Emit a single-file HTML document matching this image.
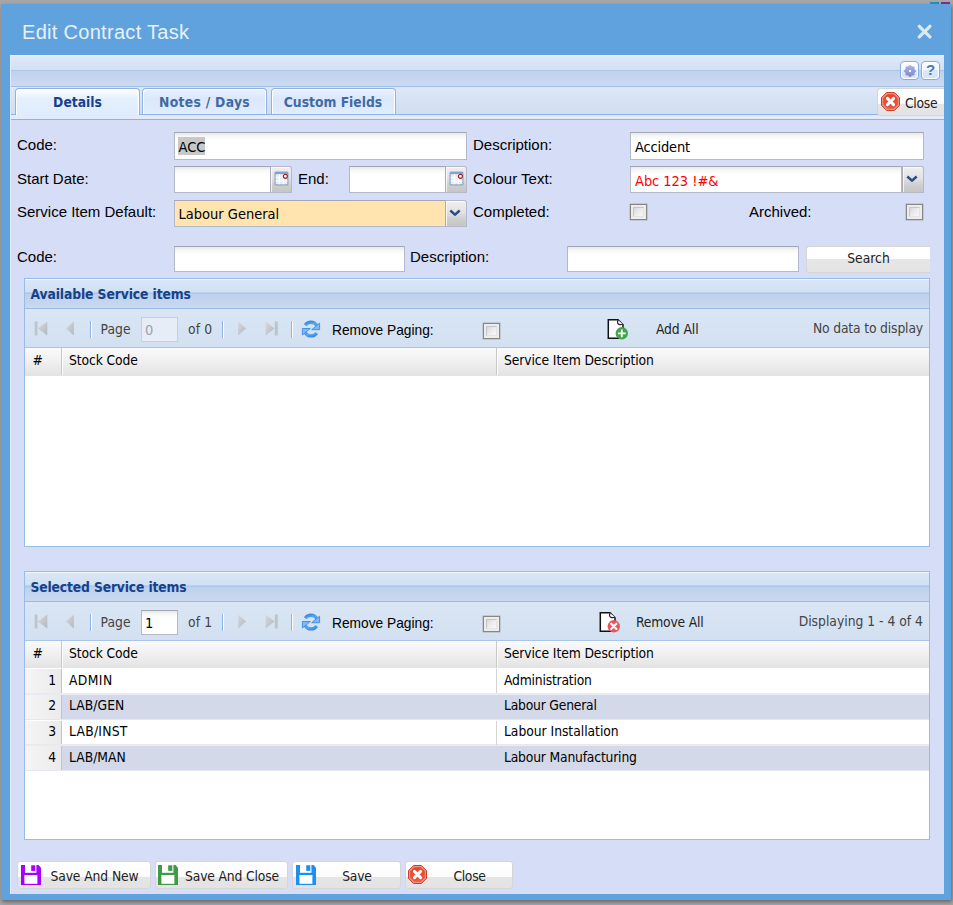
<!DOCTYPE html>
<html lang="en">
<head>
<meta charset="utf-8">
<title>Edit Contract Task</title>
<style>
*{box-sizing:border-box;margin:0;padding:0}
html,body{width:953px;height:905px;overflow:hidden}
body{background:#a6a6a6;position:relative;font-family:"Liberation Sans",Arial,sans-serif;font-size:15px;color:#000}
.abs,.win *{position:absolute}
.win{position:absolute;left:1px;top:4px;width:950px;height:896px;background:#5fa2dd;box-shadow:1px 2px 4px rgba(0,0,0,.4)}
.th{font-family:"DejaVu Sans Condensed","DejaVu Sans","Liberation Sans",sans-serif;font-stretch:condensed}
.t{white-space:nowrap;font-size:13.75px;line-height:16px;display:block}
/* all following coordinates are page coordinates, container #pg is at 0,0 */
#pg{position:absolute;left:0;top:0;width:953px;height:905px}
#pg *{position:absolute}
.title{left:22px;top:20px;font-size:20px;line-height:24px;color:#e9f1fa;letter-spacing:.3px;white-space:nowrap}
.inner{left:10px;top:55px;width:934px;height:839px;background:#d6ddf6;border-left:1px solid #e3ebf8;border-top:1px solid #e9f0fa}
.hdA{left:11px;top:56px;width:933px;height:14px;background:linear-gradient(#dfe9f7,#d2e0f3)}
.hdL{left:11px;top:70px;width:933px;height:1px;background:#afc8ea}
.hdB{left:11px;top:71px;width:933px;height:15px;background:linear-gradient(#bfd1ed,#cddbf1)}
.hdL2{left:11px;top:86px;width:933px;height:1px;background:#a3c0e8}
.tool{top:61px;width:19px;height:19px;border:1px solid #86abe0;border-radius:4px;background:linear-gradient(#fbfdff 0,#f1f6fd 48%,#dbe9fb 50%,#d3e4fa 100%);box-shadow:inset 0 0 0 1px #fff}
.strip{left:11px;top:87px;width:933px;height:27px;background:linear-gradient(#dee8f6,#cfdef1)}
.stripL{left:11px;top:114px;width:933px;height:1px;background:#8db2e3}
.spacer{left:11px;top:115px;width:933px;height:4px;background:#e1ebfb}
.stripL2{left:11px;top:119px;width:933px;height:1px;background:#8db2e3}
.tab{top:88px;height:26px;border:1px solid #8db2e3;border-bottom:none;border-radius:4px 4px 0 0;background:linear-gradient(#e9f1fd,#dbe8fb 40%,#e1ecfd);box-shadow:inset 1px 1px 0 #fff,inset -1px 0 0 #fff}
.tab.act{height:27px;background:linear-gradient(#ffffff,#e6f0fd 35%,#deecfd)}
.tab .t{left:0;right:0;text-align:center;top:5px;font-size:13.75px;font-weight:bold;color:#416aa3;line-height:16px}
.tab.act .t{color:#15428b}
.lbl{font-size:15px;line-height:18px;white-space:nowrap;color:#000}
.inp{background:#fff linear-gradient(#e6e9e6 0,#f5f6f5 3px,#fff 7px);border:1px solid #b5b8c8;border-top-color:#a3a6b5;height:28px}
.inp .t{line-height:18px}
.trg{width:22px;border:1px solid #b5b8c8;border-left-color:#a9acb8;border-radius:0 3px 0 0;background:linear-gradient(#efefef,#e2e2e2 45%,#cdcdcd 75%,#c6c6c6);box-shadow:inset 1px 1px 0 rgba(255,255,255,.75)}
.cb{width:16.500px;height:16px;border:1px solid #878783;background:#ededed;box-shadow:0 0 0 .5px rgba(135,135,131,.55)}
.cb::after{content:"";position:absolute;left:2px;top:2px;right:2px;bottom:2px;border:1px solid #c2c7cb;border-right-color:#e2e4e5;border-bottom-color:#e2e4e5;background:linear-gradient(135deg,#d4d8db,#ececec 50%,#f7f7f7)}
.btn{border:1px solid #d6d6d6;border-radius:3px;background:linear-gradient(#fff 0,#fff 50%,#e6e6e6 50%,#e4e4e4 100%)}
.btn .t{font-size:13.75px;line-height:16px;color:#222}
.pan{border:1px solid #99bbe8;background:#fff}
.ph{height:31px;box-shadow:inset 0 1px 0 #f3f7fc;background:linear-gradient(#dbe7f6 0,#d0e0f3 46%,#adc6ea 47%,#adc6ea 50%,#bdd0ec 51%,#cad9f0 100%);border-bottom:1px solid #99bbe8}
.ph .t{left:5.500px;top:7px;font-size:13.75px;font-weight:bold;color:#15428b;line-height:16px}
.tb{height:38px;background:linear-gradient(#dae6f4,#d2e0f1);border-bottom:1px solid #a9c4e9}
.tb .t{font-size:13.75px;line-height:16px;color:#444}
.sep{width:2px;height:17px;background:linear-gradient(90deg,#8db2e3 50%,#fff 50%)}
.gh{height:28px;background:linear-gradient(#fafafa,#f1f1f1 45%,#e3e3e3);border-bottom:1px solid #e3e3e3}
.gh .t,.row .t{font-size:13.75px;line-height:16px;color:#000}
.row{height:25.5px;left:0;width:904px;border-bottom:1px solid #e9e9e9;border-top:1px solid #fff;background:#fff}
.row.alt{background:#d3d9e8;border-top-color:#e9ecf4;border-bottom-color:#e4e7ef}
.num{left:0;top:0;width:37px;height:23.5px;background:linear-gradient(90deg,#f5f5f5,#ebebeb);border-right:1px solid #c4c4c4}
</style>
</head>
<body>
<i class="abs" style="left:930px;top:2px;width:9px;height:2px;background:#2b8fb5"></i><i class="abs" style="left:941px;top:2px;width:9px;height:2px;background:#8a2a8c"></i>
<div class="win"></div>
<div id="pg">
<div class="title">Edit Contract Task</div>
<svg style="left:917px;top:24px" width="15" height="15" viewBox="0 0 15 15"><path d="M2.300 2.300 L12.900 12.900 M12.900 2.300 L2.300 12.900" stroke="#dde8f6" stroke-width="3.200" stroke-linecap="round"/></svg>
<div class="inner"></div>
<div class="hdA"></div><div class="hdL"></div><div class="hdB"></div><div class="hdL2"></div>
<div class="tool" style="left:900px"><svg style="left:2.500px;top:2.500px" width="12" height="12" viewBox="0 0 12 12"><defs><linearGradient id="gg" x1="0" y1="0" x2="0" y2="1"><stop offset="0" stop-color="#a9b1e2"/><stop offset="1" stop-color="#7f88cd"/></linearGradient></defs><path d="M4.99 1.41 L5.17 0.56 L6.83 0.56 L7.01 1.41 L8.53 2.04 L9.26 1.57 L10.43 2.74 L9.96 3.47 L10.59 4.99 L11.44 5.17 L11.44 6.83 L10.59 7.01 L9.96 8.53 L10.43 9.26 L9.26 10.43 L8.53 9.96 L7.01 10.59 L6.83 11.44 L5.17 11.44 L4.99 10.59 L3.47 9.96 L2.74 10.43 L1.57 9.26 L2.04 8.53 L1.41 7.01 L0.56 6.83 L0.56 5.17 L1.41 4.99 L2.04 3.47 L1.57 2.74 L2.74 1.57 L3.47 2.04z" fill="url(#gg)" stroke="url(#gg)" stroke-width=".8" stroke-linejoin="round"/><circle cx="6" cy="6" r="1.200" fill="#f4f6fd"/></svg></div>
<div class="tool" style="left:921px"><span class="t" style="left:0;width:17px;text-align:center;top:0;font:bold 15px/16px 'Liberation Sans',sans-serif;color:#4b7aaf">?</span></div>
<div class="strip"></div><div class="stripL"></div><div class="spacer"></div><div class="stripL2"></div>
<div class="tab act th" style="left:15px;width:125px"><span class="t" style="letter-spacing:0px">Details</span></div>
<div class="tab th" style="left:142px;width:125px"><span class="t" style="letter-spacing:0.3px">Notes / Days</span></div>
<div class="tab th" style="left:270.5px;width:125px"><span class="t" style="letter-spacing:0px">Custom Fields</span></div>
<div class="btn" style="left:877px;top:88px;width:67px;height:28px;background:linear-gradient(#fff 0,#fcfcfc 15px,#e5e5e5 15px,#e3e3e3 100%);border-radius:4px 0 0 4px;border-right:none"></div>
<svg style="left:881px;top:92px" width="19" height="19" viewBox="0 0 19 19"><defs><linearGradient id="rf" x1="0" y1="0" x2="1" y2="1"><stop offset="0" stop-color="#3588e2"/><stop offset=".6" stop-color="#5aa6f0"/><stop offset="1" stop-color="#4a98ea"/></linearGradient><linearGradient id="pgr" x1="0" y1="0" x2="1" y2="1"><stop offset="0" stop-color="#d6d9de"/><stop offset="1" stop-color="#b3b7bf"/></linearGradient><linearGradient id="rg" x1="0" y1="0" x2="0" y2="1"><stop offset="0" stop-color="#e8452a"/><stop offset="1" stop-color="#e65a49"/></linearGradient></defs><path d="M5.600 .5h7.800l5.100 5.100v7.800l-5.100 5.100H5.600L.5 13.400V5.600z" fill="#f0907f" stroke="#cc3f2f" stroke-width="1"/><path d="M6.300 2.200h6.400l4.100 4.100v6.400l-4.100 4.100H6.300l-4.100-4.100V6.300z" fill="url(#rg)"/><path d="M6.400 6.400l6.200 6.200M12.600 6.400l-6.200 6.200" stroke="#fff" stroke-width="2.900" stroke-linecap="round"/></svg>
<span class="t th" style="left:905px;top:95px;color:#222;letter-spacing:-0.3px">Close</span>
<span class="lbl" style="left:17px;top:136px">Code:</span>
<div class="inp th" style="left:174px;top:132px;width:293px;height:28px;"><i style="left:3px;top:4px;width:27px;height:18px;background:#c8c8c8"></i><span class="t " style="left:3.5px;top:4.5px;font-size:14.5px;letter-spacing:0px">ACC</span></div>
<span class="lbl" style="left:473px;top:136px">Description:</span>
<div class="inp th" style="left:630px;top:132px;width:294px;height:28px;"><span class="t " style="left:4px;top:4.5px;font-size:14.5px;letter-spacing:-0.17px">Accident</span></div>
<span class="lbl" style="left:17px;top:170px">Start Date:</span>
<div class="inp th" style="left:174px;top:166px;width:97px;height:27px;"></div>
<div class="trg" style="left:269.5px;top:166px;height:27px"><svg style="left:3px;top:4px" width="15" height="15" viewBox="0 0 15 15"><rect x=".5" y=".5" width="14" height="14" rx="1.500" fill="#87a1cd"/><rect x="1.700" y="3.200" width="11.600" height="10.100" fill="#e9edf4"/><path d="M1.700 6.600h11.600M1.700 10h11.600M5.500 3.200v10.100M9.500 3.200v10.100" stroke="#fff" stroke-width="1"/><circle cx="11.400" cy="5.300" r="2" fill="#fff" stroke="#9f2232" stroke-width="1.200"/></svg></div>
<span class="lbl" style="left:298px;top:170px">End:</span>
<div class="inp th" style="left:349px;top:166px;width:97px;height:27px;"></div>
<div class="trg" style="left:445px;top:166px;height:27px"><svg style="left:3px;top:4px" width="15" height="15" viewBox="0 0 15 15"><rect x=".5" y=".5" width="14" height="14" rx="1.500" fill="#87a1cd"/><rect x="1.700" y="3.200" width="11.600" height="10.100" fill="#e9edf4"/><path d="M1.700 6.600h11.600M1.700 10h11.600M5.500 3.200v10.100M9.500 3.200v10.100" stroke="#fff" stroke-width="1"/><circle cx="11.400" cy="5.300" r="2" fill="#fff" stroke="#9f2232" stroke-width="1.200"/></svg></div>
<span class="lbl" style="left:473px;top:170px">Colour Text:</span>
<div class="inp th" style="left:630px;top:166px;width:272px;height:27px;"><span class="t " style="left:4px;top:5px;font-size:14.5px;color:#f00;letter-spacing:-0.04px">Abc 123 !#&amp;</span></div>
<div class="trg" style="left:902px;top:166px;height:27px"><svg style="left:3px;top:8px" width="12" height="8" viewBox="0 0 12 8"><path d="M1.300 1.500L6 5.600 10.700 1.500" fill="none" stroke="#2a4b8d" stroke-width="2.500"/></svg></div>
<span class="lbl" style="left:17px;top:203px">Service Item Default:</span>
<div class="inp th" style="left:174px;top:200px;width:272px;height:27px;background:#ffe4b0"><span class="t " style="left:3.5px;top:3.5px;font-size:14.5px;letter-spacing:0px">Labour General</span></div>
<div class="trg" style="left:445px;top:200px;height:27px"><svg style="left:3px;top:8px" width="12" height="8" viewBox="0 0 12 8"><path d="M1.300 1.500L6 5.600 10.700 1.500" fill="none" stroke="#2a4b8d" stroke-width="2.500"/></svg></div>
<span class="lbl" style="left:473px;top:203px">Completed:</span>
<div class="cb" style="left:630px;top:204px"></div>
<span class="lbl" style="left:749px;top:203px">Archived:</span>
<div class="cb" style="left:906px;top:204px"></div>
<span class="lbl" style="left:17px;top:248px">Code:</span>
<div class="inp th" style="left:174px;top:246px;width:231px;height:26px;"></div>
<span class="lbl" style="left:410px;top:248px">Description:</span>
<div class="inp th" style="left:567px;top:246px;width:232px;height:26px;"></div>
<div class="btn th" style="left:806px;top:246px;width:124px;height:27px;border-right:none;border-radius:3px 0 0 3px"><span class="t th" style="left:0px;top:3px;color:#222;right:0;text-align:center">Search</span></div>
<div class="pan" style="left:24px;top:278px;width:906px;height:269px"></div>
<div class="ph th" style="left:25px;top:279px;width:904px;height:30px"><span class="t" style="letter-spacing:-0.1px">Available Service items</span></div>
<div class="tb" style="left:25px;top:309px;width:904px;height:39px"></div>
<svg style="left:34px;top:321px" width="14" height="15" viewBox="0 0 14 15"><rect x=".7" y=".5" width="2.800" height="14" fill="#bfc3ca"/><path d="M13.300 .5v14L3.800 7.500z" fill="url(#pgr)"/></svg>
<svg style="left:65px;top:321px" width="10" height="15" viewBox="0 0 10 15"><path d="M8.800 .5v14L1 7.500z" fill="url(#pgr)"/></svg>
<div class="sep" style="left:90px;top:321px"></div>
<span class="t th" style="left:100.5px;top:321px;color:#444;letter-spacing:0.1px">Page</span>
<div class="inp th" style="left:141px;top:317px;width:37px;height:25px;background:#e6edf6;border-color:#c4cfdf;"><span class="t " style="left:3px;top:3px;font-size:14.5px;color:#9aa0a8">0</span></div>
<span class="t th" style="left:188px;top:321px;color:#444;letter-spacing:0.1px">of 0</span>
<div class="sep" style="left:222px;top:321px"></div>
<svg style="left:237px;top:321px" width="10" height="15" viewBox="0 0 10 15"><path d="M1.200 .5v14L9 7.500z" fill="url(#pgr)"/></svg>
<svg style="left:265px;top:321px" width="14" height="15" viewBox="0 0 14 15"><path d="M.7 .5v14L9.500 7.500z" fill="url(#pgr)"/><rect x="9.800" y=".5" width="3" height="14" fill="#bfc3ca"/></svg>
<div class="sep" style="left:291px;top:321px"></div>
<svg style="left:301px;top:319px" width="20" height="20" viewBox="0 0 20 20"><g id="ra278"><path d="M4.250 6.200A6.900 6.900 0 0 1 15.700 6.400" fill="none" stroke="url(#rf)" stroke-width="3.300"/><path d="M18.600 4.200v6.500h-7.900z" fill="#7db9f6" stroke="#3a8ce4" stroke-width=".9" stroke-linejoin="round"/></g><use href="#ra278" transform="rotate(180 10 10.100)"/></svg>
<span class="lbl" style="left:332px;top:322.5px;font-size:13.75px;line-height:16px">Remove Paging:</span>
<div class="cb" style="left:483px;top:323px"></div>
<svg style="left:606.5px;top:319px" width="22" height="21" viewBox="0 0 22 21"><path d="M1.300 .8h9.700l5 5v13.400H1.300z" fill="#fff" stroke="#111" stroke-width="1.500"/><path d="M11.200 1.200c-1.300 2-.8 4 1.500 4.400 1.200.2 2.300-.1 3-.6" fill="#fff" stroke="#222" stroke-width="1.200"/><circle cx="14.800" cy="14.300" r="6.200" fill="#43a44e"/><path d="M14.800 10.400v7.800M10.900 14.300h7.800" stroke="#fff" stroke-width="1.800"/></svg>
<span class="t th" style="left:656px;top:321px;color:#222;letter-spacing:-0.1px">Add All</span>
<span class="t th" style="right:30px;top:320px;color:#444;letter-spacing:-0.15px">No data to display</span>
<div class="gh th" style="left:25px;top:348px;width:904px;height:28px">
<i style="left:36px;top:0;width:2px;height:27px;background:linear-gradient(90deg,#c8c8c8 50%,#fbfbfb 50%)"></i>
<i style="left:471px;top:0;width:2px;height:27px;background:linear-gradient(90deg,#c8c8c8 50%,#fbfbfb 50%)"></i>
<span class="t th" style="left:7.5px;top:4px">#</span><span class="t th" style="left:44px;top:4px;letter-spacing:-0.1px">Stock Code</span><span class="t th" style="left:479px;top:4px;letter-spacing:-0.1px">Service Item Description</span>
</div>
<div class="pan" style="left:24px;top:571px;width:906px;height:269px"></div>
<div class="ph th" style="left:25px;top:572px;width:904px;height:30px"><span class="t" style="letter-spacing:-0.15px">Selected Service items</span></div>
<div class="tb" style="left:25px;top:602px;width:904px;height:39px"></div>
<svg style="left:34px;top:614px" width="14" height="15" viewBox="0 0 14 15"><rect x=".7" y=".5" width="2.800" height="14" fill="#bfc3ca"/><path d="M13.300 .5v14L3.800 7.500z" fill="url(#pgr)"/></svg>
<svg style="left:65px;top:614px" width="10" height="15" viewBox="0 0 10 15"><path d="M8.800 .5v14L1 7.500z" fill="url(#pgr)"/></svg>
<div class="sep" style="left:90px;top:614px"></div>
<span class="t th" style="left:100.5px;top:614px;color:#444;letter-spacing:0.1px">Page</span>
<div class="inp th" style="left:141px;top:610px;width:37px;height:25px;"><span class="t " style="left:3px;top:3px;font-size:14.5px;color:#000">1</span></div>
<span class="t th" style="left:188px;top:614px;color:#444;letter-spacing:0.1px">of 1</span>
<div class="sep" style="left:222px;top:614px"></div>
<svg style="left:237px;top:614px" width="10" height="15" viewBox="0 0 10 15"><path d="M1.200 .5v14L9 7.500z" fill="url(#pgr)"/></svg>
<svg style="left:265px;top:614px" width="14" height="15" viewBox="0 0 14 15"><path d="M.7 .5v14L9.500 7.500z" fill="url(#pgr)"/><rect x="9.800" y=".5" width="3" height="14" fill="#bfc3ca"/></svg>
<div class="sep" style="left:291px;top:614px"></div>
<svg style="left:301px;top:612px" width="20" height="20" viewBox="0 0 20 20"><g id="ra571"><path d="M4.250 6.200A6.900 6.900 0 0 1 15.700 6.400" fill="none" stroke="url(#rf)" stroke-width="3.300"/><path d="M18.600 4.200v6.500h-7.900z" fill="#7db9f6" stroke="#3a8ce4" stroke-width=".9" stroke-linejoin="round"/></g><use href="#ra571" transform="rotate(180 10 10.100)"/></svg>
<span class="lbl" style="left:332px;top:615.5px;font-size:13.75px;line-height:16px">Remove Paging:</span>
<div class="cb" style="left:483px;top:616px"></div>
<svg style="left:598.5px;top:612px" width="22" height="21" viewBox="0 0 22 21"><path d="M1.300 .8h9.700l5 5v13.400H1.300z" fill="#fff" stroke="#111" stroke-width="1.500"/><path d="M11.200 1.200c-1.300 2-.8 4 1.500 4.400 1.200.2 2.300-.1 3-.6" fill="#fff" stroke="#222" stroke-width="1.200"/><circle cx="14.800" cy="14.300" r="6.200" fill="#ea5460"/><path d="M12.200 11.700l5.200 5.200M17.400 11.700l-5.200 5.200" stroke="#fff" stroke-width="2.100" stroke-linecap="round"/></svg>
<span class="t th" style="left:636px;top:614px;color:#222;letter-spacing:-0.2px">Remove All</span>
<span class="t th" style="right:30px;top:613px;color:#444;letter-spacing:0px">Displaying 1 - 4 of 4</span>
<div class="gh th" style="left:25px;top:641px;width:904px;height:28px">
<i style="left:36px;top:0;width:2px;height:27px;background:linear-gradient(90deg,#c8c8c8 50%,#fbfbfb 50%)"></i>
<i style="left:471px;top:0;width:2px;height:27px;background:linear-gradient(90deg,#c8c8c8 50%,#fbfbfb 50%)"></i>
<span class="t th" style="left:7.5px;top:4px">#</span><span class="t th" style="left:44px;top:4px;letter-spacing:-0.1px">Stock Code</span><span class="t th" style="left:479px;top:4px;letter-spacing:-0.1px">Service Item Description</span>
</div>
<div class="row th" style="left:25px;top:668px"><div class="num"><span class="t th" style="right:5px;top:3px">1</span></div><span class="t th" style="left:44px;top:3px;letter-spacing:0.4px">ADMIN</span><i style="left:471px;top:0;width:1px;height:24px;background:#d4d4d4"></i><span class="t th" style="left:479px;top:3px;letter-spacing:-0.2px">Administration</span></div>
<div class="row th alt" style="left:25px;top:694px"><div class="num"><span class="t th" style="right:5px;top:2px">2</span></div><span class="t th" style="left:44px;top:2px;letter-spacing:0.05px">LAB/GEN</span><span class="t th" style="left:479px;top:2px;letter-spacing:-0.2px">Labour General</span></div>
<div class="row th" style="left:25px;top:719.5px"><div class="num"><span class="t th" style="right:5px;top:2px">3</span></div><span class="t th" style="left:44px;top:2px;letter-spacing:0.25px">LAB/INST</span><i style="left:471px;top:0;width:1px;height:24px;background:#d4d4d4"></i><span class="t th" style="left:479px;top:2px;letter-spacing:-0.03px">Labour Installation</span></div>
<div class="row th alt" style="left:25px;top:745px"><div class="num"><span class="t th" style="right:5px;top:3px">4</span></div><span class="t th" style="left:44px;top:3px;letter-spacing:0px">LAB/MAN</span><span class="t th" style="left:479px;top:3px;letter-spacing:-0.18px">Labour Manufacturing</span></div>
<div class="btn th" style="left:17px;top:861px;width:134px;height:28px;background:linear-gradient(#fff 0,#fcfcfc 15px,#e5e5e5 15px,#e3e3e3 100%)"><span class="t th" style="left:21px;top:5.5px;color:#222;letter-spacing:-0.1px;right:0;text-align:center">Save And New</span></div>
<div class="btn th" style="left:155px;top:861px;width:133px;height:28px;background:linear-gradient(#fff 0,#fcfcfc 15px,#e5e5e5 15px,#e3e3e3 100%)"><span class="t th" style="left:21px;top:5.5px;color:#222;letter-spacing:-0.15px;right:0;text-align:center">Save And Close</span></div>
<div class="btn th" style="left:292px;top:861px;width:109px;height:28px;background:linear-gradient(#fff 0,#fcfcfc 15px,#e5e5e5 15px,#e3e3e3 100%)"><span class="t th" style="left:21px;top:5.5px;color:#222;letter-spacing:-0.2px;right:0;text-align:center">Save</span></div>
<div class="btn th" style="left:405px;top:861px;width:108px;height:28px;background:linear-gradient(#fff 0,#fcfcfc 15px,#e5e5e5 15px,#e3e3e3 100%)"><span class="t th" style="left:21px;top:5.5px;color:#222;letter-spacing:-0.3px;right:0;text-align:center">Close</span></div>
<svg style="left:21px;top:865px" width="20" height="20" viewBox="0 0 20 20"><path d="M0 0h17.500l2.500 2.800v17.200H0z" fill="#a800ff"/><rect x="4" y="0" width="11.400" height="7.800" fill="#fff"/><rect x="10.200" y=".3" width="4.100" height="5.600" fill="#a800ff"/><rect x="3.400" y="10" width="13" height="8.800" fill="#fff"/></svg>
<svg style="left:158px;top:865px" width="20" height="20" viewBox="0 0 20 20"><path d="M0 0h17.500l2.500 2.800v17.200H0z" fill="#3f9a44"/><rect x="4" y="0" width="11.400" height="7.800" fill="#fff"/><rect x="10.200" y=".3" width="4.100" height="5.600" fill="#3f9a44"/><rect x="3.400" y="10" width="13" height="8.800" fill="#fff"/></svg>
<svg style="left:296px;top:865px" width="20" height="20" viewBox="0 0 20 20"><path d="M0 0h17.500l2.500 2.800v17.200H0z" fill="#1e8ff2"/><rect x="4" y="0" width="11.400" height="7.800" fill="#fff"/><rect x="10.200" y=".3" width="4.100" height="5.600" fill="#1e8ff2"/><rect x="3.400" y="10" width="13" height="8.800" fill="#fff"/></svg>
<svg style="left:408px;top:865px" width="19" height="19" viewBox="0 0 19 19"><path d="M5.600 .5h7.800l5.100 5.100v7.800l-5.100 5.100H5.600L.5 13.400V5.600z" fill="#f0907f" stroke="#cc3f2f" stroke-width="1"/><path d="M6.300 2.200h6.400l4.100 4.100v6.400l-4.100 4.100H6.300l-4.100-4.100V6.300z" fill="url(#rg)"/><path d="M6.400 6.400l6.200 6.200M12.600 6.400l-6.200 6.200" stroke="#fff" stroke-width="2.900" stroke-linecap="round"/></svg>
</div>
</body>
</html>
